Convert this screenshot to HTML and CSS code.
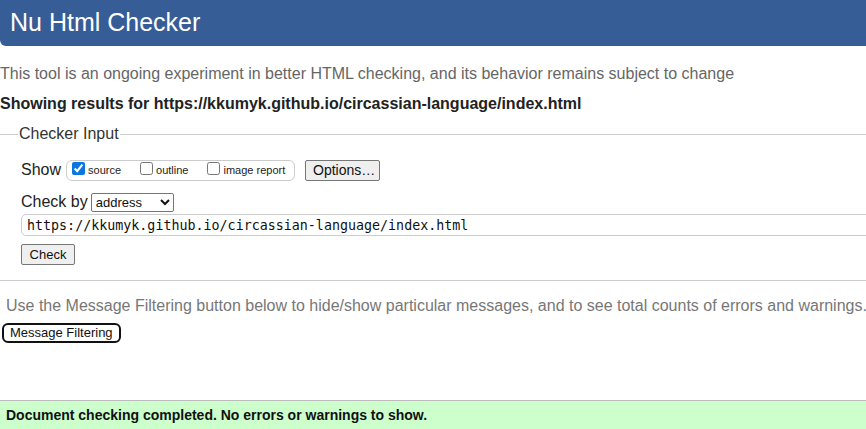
FILE: index.html
```html
<!DOCTYPE html>
<html>
<head>
<meta charset="utf-8">
<title>Nu Html Checker</title>
<link rel="stylesheet" href="styles.css">
</head>
<body>
<h1 class="title">Nu Html Checker</h1>
<p class="intro">This tool is an ongoing experiment in better HTML checking, and its behavior remains subject to change</p>
<p class="showing">Showing results for https://kkumyk.github.io/circassian-language/index.html</p>
<fieldset class="checker">
  <legend class="legend">Checker Input</legend>
  <div class="row show-row">
    <span class="label">Show</span>
    <span class="show-box">
      <label class="opt"><input type="checkbox" checked> source</label>
      <label class="opt"><input type="checkbox"> outline</label>
      <label class="opt"><input type="checkbox"> image report</label>
    </span>
    <button class="btn options">Options…</button>
  </div>
  <div class="row by-row">
    <span class="label">Check by</span>
    <select class="select"><option>address</option></select>
  </div>
  <div class="row url-row">
    <input class="url" type="text" value="https://kkumyk.github.io/circassian-language/index.html">
  </div>
  <div class="row">
    <button class="btn check">Check</button>
  </div>
</fieldset>
<p class="filter-note">Use the Message Filtering button below to hide/show particular messages, and to see total counts of errors and warnings.</p>
<button class="filter-btn">Message Filtering</button>
<div class="success">Document checking completed. No errors or warnings to show.</div>
</body>
</html>
```
FILE: styles.css
```css
html, body {
  margin: 0;
  padding: 0;
  overflow: hidden;
}
body {
  font-family: "Liberation Sans", Arial, sans-serif;
  font-size: 16px;
  color: #222;
  background: #fff;
  width: 866px;
}
.title {
  margin: 0;
  height: 46px;
  background: #365d95;
  color: #fff;
  font-weight: normal;
  font-size: 25px;
  line-height: 45px;
  padding-left: 10px;
  border-bottom-left-radius: 6px;
  box-sizing: border-box;
}
.intro {
  margin: 19px 0 0 0;
  color: #666;
  line-height: 18px;
}
.showing {
  margin: 12px 0 0 0;
  font-weight: bold;
  line-height: 18px;
}
.checker {
  margin: 12px 0 0 0;
  padding: 6px 0 15px 21px;
  border: none;
  border-top: 1px solid #ccc;
  border-bottom: 1px solid #ccc;
  overflow: hidden;
  min-width: 0;
}
.legend {
  margin-left: -3px;
  padding: 0 1px;
  color: #333;
  font-size: 16px;
}
.row {
  display: flex;
  align-items: center;
}
.label {
  color: #222;
  font-size: 16px;
  margin-right: 3px;
}
.show-row {
  margin-top: 10px;
  height: 22px;
}
.show-box {
  display: inline-flex;
  align-items: center;
  gap: 19px;
  border: 1px solid #ccc;
  border-radius: 6px;
  height: 19px;
  padding: 0 6px 0 5px;
  margin-left: 2px;
  width: 216px;
  box-sizing: content-box;
}
.opt {
  font-size: 11px;
  display: inline-flex;
  align-items: center;
  color: #222;
}
.opt input {
  margin: -3px 3px 0 0;
  width: 13px;
  height: 13px;
  accent-color: #0b75e0;
}
.btn {
  font-family: "Liberation Sans", Arial, sans-serif;
  font-size: 13px;
  color: #111;
  background: #efefef;
  border: 1px solid #767676;
  border-radius: 2px;
  padding: 0 7px;
  height: 21px;
}
.options {
  margin-left: 10px;
  font-size: 14px;
  width: 75px;
}
.by-row {
  margin-top: 11px;
  height: 20px;
}
.select {
  font-family: "Liberation Sans", Arial, sans-serif;
  font-size: 13px;
  height: 19px;
  width: 83px;
  margin-left: 0;
  padding: 0;
  border: 1px solid #767676;
  border-radius: 2px;
  background: #fff;
  color: #111;
}
.url-row {
  margin-top: 2px;
}
.url {
  width: 900px;
  flex: none;
  height: 22px;
  box-sizing: border-box;
  font-family: "DejaVu Sans Mono", monospace;
  font-size: 13.333px;
  color: #111;
  border: 1px solid #ccc;
  border-radius: 5px;
  padding: 0 5px;
}
.check {
  margin-top: 8px;
  width: 54px;
  height: 21px;
  padding: 0;
}
.filter-note {
  margin: 16px 0 0 6px;
  color: #777;
  line-height: 18px;
  white-space: nowrap;
}
.filter-btn {
  display: block;
  margin: 8px 0 0 2px;
  font-family: "Liberation Sans", Arial, sans-serif;
  font-size: 13px;
  color: #111;
  background: #fff;
  border: 2px solid #111;
  border-radius: 6px;
  height: 20px;
  padding: 0 6px;
  line-height: 14px;
}
.success {
  margin-top: 57px;
  background: #ccffcc;
  border-top: 1px solid #bbb;
  padding: 6px 6px 8px 6px;
  font-size: 14px;
  font-weight: bold;
  color: #111;
  line-height: 16px;
}
```
